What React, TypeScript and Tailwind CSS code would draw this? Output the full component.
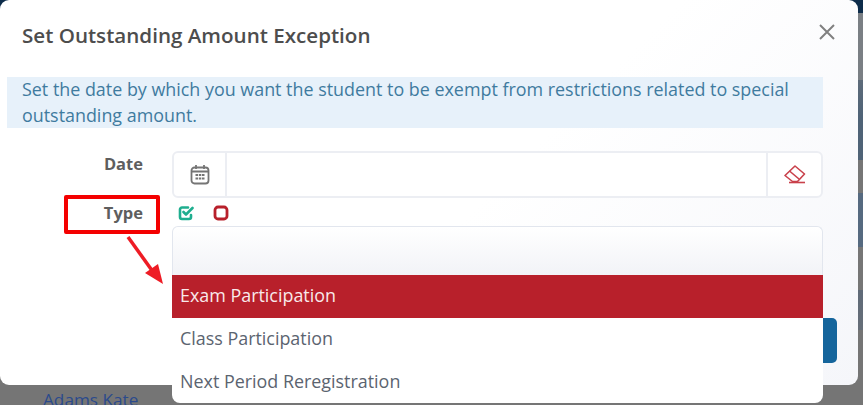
import React from "react";

function CalendarIcon() {
  return (
    <svg width="20" height="21" viewBox="0 0 20 21" fill="none" stroke="#757575" strokeWidth="1.800">
      <rect x="1.500" y="3.500" width="17" height="16" rx="3" />
      <path d="M1.500 7.500h17M6 1v4M14 1v4" />
      <path d="M5.500 11h2.500M8.800 11h2.500M12 11h2.500M5.500 14.500h2.500M8.800 14.500h2.500M12 14.500h2.500" strokeWidth="2.200" />
    </svg>
  );
}

function EraserIcon() {
  return (
    <svg width="22" height="20" viewBox="0 0 22 20" fill="none" stroke="#c9414b" strokeWidth="1.600" strokeLinejoin="round">
      <path d="M11 1L20.500 9L13.500 16.500H8.500L1 10.500Z" />
      <path d="M5.500 6L15 14" />
      <path d="M5 17.500H21" />
    </svg>
  );
}

function CheckSquare() {
  return (
    <svg width="16" height="16" viewBox="0 0 16 16" fill="none" stroke="#1fae8f" strokeWidth="2.600" strokeLinecap="round" strokeLinejoin="round">
      <path d="M13 10V12a2 2 0 0 1-2 2H4a2 2 0 0 1-2-2V4.500a2 2 0 0 1 2-2h6" />
      <path d="M5.500 7l2.500 2.500L14.500 3" />
    </svg>
  );
}

function StopSquare() {
  return (
    <svg width="16" height="16" viewBox="0 0 16 16" fill="none" stroke="#b8202b" strokeWidth="2.800">
      <rect x="2" y="2" width="12" height="12" rx="3" />
    </svg>
  );
}

export default function App() {
  return (
    <div
      className="relative w-[863px] h-[405px] overflow-hidden bg-[linear-gradient(to_bottom,#0d2c4a_0px,#0d2c4a_13px,#7a7f84_13px,#7a7f84_80px,#5d6b7a_80px,#4f6377_117px,#4f6377_160px,#767676_160px,#767676_193px,#566a80_193px,#566a80_247px,#767676_247px,#767676_290px,#5f6a78_290px,#666e78_330px,#757575_330px)]"
      style={{ fontFamily: '"Open Sans", "Noto Sans", sans-serif' }}
    >
      <div className="w-[858px] h-[385px] bg-[linear-gradient(135deg,#ffffff_55%,#f5f6fa_100%)] rounded-[9px] flex flex-col">
        <div className="h-[70px] flex items-center justify-between pl-[22px] pr-[22px] shrink-0">
          <h1 className="text-[20.600px] font-semibold text-[#4d4d4d] leading-none">Set Outstanding Amount Exception</h1>
          <svg className="-mt-[6px]" width="18" height="18" viewBox="0 0 18 18" stroke="#808080" strokeWidth="2" fill="none">
            <path d="M2 2L16 16M16 2L2 16" />
          </svg>
        </div>
        <div className="mt-[7px] ml-[7px] w-[816px] h-[51px] bg-[#e7f1fa] pl-[15px] text-[#3f7b9f] text-[17.900px] leading-[25.500px] shrink-0">
          Set the date by which you want the student to be exempt from restrictions related to special outstanding amount.
        </div>

        <div className="mt-[23px] flex shrink-0">
          <div className="w-[143px] text-right text-[16.500px] font-bold text-[#5e5e5e] leading-[26px]">Date</div>
          <div className="ml-[29px] w-[651px] h-[47px] flex border-2 border-[#eceef3] rounded-[6px] bg-white">
            <div className="w-[53px] flex items-center justify-center border-r-2 border-[#eceef3]">
              <CalendarIcon />
            </div>
            <div className="flex-1" />
            <div className="w-[55px] flex items-center justify-center border-l-2 border-[#eceef3]">
              <EraserIcon />
            </div>
          </div>
        </div>

        <div className="mt-[6px] flex shrink-0">
          <div className="w-[143px] text-right text-[16.500px] font-bold text-[#5e5e5e] leading-[18px]">Type</div>
          <div className="ml-[29px] w-[651px] relative">
            <div className="h-[22px] flex items-start gap-[19px] pl-[6px] pt-[1px]">
              <CheckSquare />
              <StopSquare />
            </div>
            <div className="h-[49px] border border-b-0 border-[#e2e6ee] rounded-t-[6px] bg-[linear-gradient(to_bottom,#ffffff,#f2f3f7)]" />
            <div className="absolute left-0 top-[71px] w-[651px] z-10 bg-white rounded-b-[8px] text-[17.900px]">
              <div className="h-[43px] flex items-center pl-[8px] pb-[2px] bg-[#b8202b] text-[#f8e9ea]">Exam Participation</div>
              <div className="h-[42px] flex items-center pl-[8px] pb-[2px] text-[#5b6470]">Class Participation</div>
              <div className="h-[43px] flex items-center pl-[8px] text-[#5b6470]">Next Period Reregistration</div>
            </div>
          </div>
        </div>

        <div className="mt-[43px] flex justify-end pr-[21px] shrink-0">
          <div className="w-[40px] h-[45px] rounded-[5px] bg-[#15659c]" />
        </div>
      </div>

      <div className="pl-[43px] pt-[5px] text-[#2b4a8c] text-[17.200px] leading-[20px]">Adams Kate</div>

      <div className="absolute left-[64px] top-[195px] w-[96px] h-[39px] border-4 border-[#f40000] rounded-[2px]" />
      <svg className="absolute left-[120px] top-[230px]" width="50" height="60" viewBox="0 0 50 60" fill="none">
        <path d="M8 7L36 46" stroke="#ee1c25" strokeWidth="3.500" />
        <path d="M43 54L25 43L38 34Z" fill="#ee1c25" />
      </svg>
    </div>
  );
}
